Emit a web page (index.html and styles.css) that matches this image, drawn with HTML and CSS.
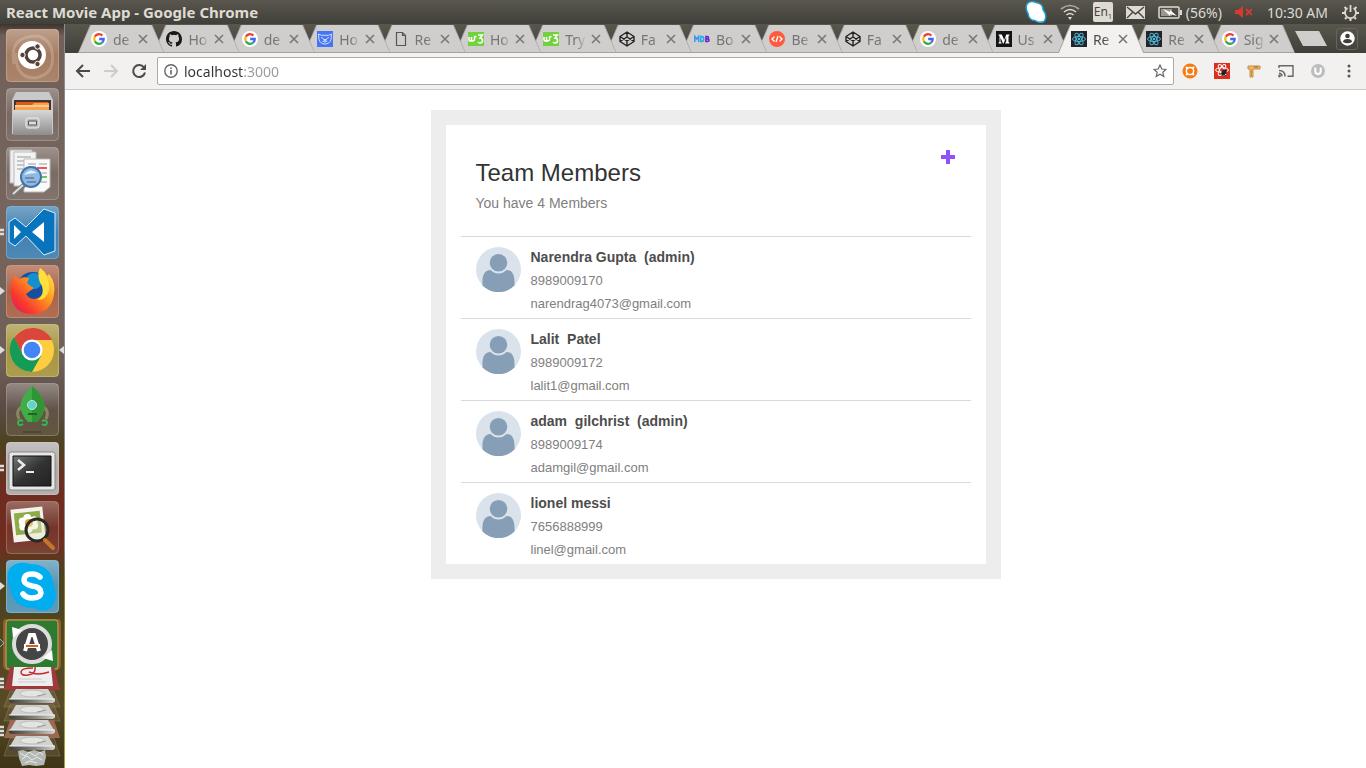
FILE: index.html
```html
<!DOCTYPE html>
<html lang="en">
<head>
<meta charset="utf-8">
<title>React Movie App</title>
<link rel="stylesheet" href="styles.css">
</head>
<body>
<svg class="defs" aria-hidden="true">
  <defs>
    <linearGradient id="shine" x1="0" y1="0" x2="0" y2="1"><stop offset="0" stop-color="#fff" stop-opacity=".3"/><stop offset=".5" stop-color="#fff" stop-opacity=".04"/><stop offset="1" stop-color="#fff" stop-opacity=".1"/></linearGradient>
    <linearGradient id="metal" x1="0" y1="0" x2="0" y2="1"><stop offset="0" stop-color="#d8d8d8"/><stop offset="1" stop-color="#8d8d8d"/></linearGradient>
    <linearGradient id="edge" x1="0" y1="0" x2="1" y2="0"><stop offset="0" stop-color="#3c3c3c"/><stop offset=".6" stop-color="#8a8a8a"/><stop offset="1" stop-color="#d0d0d0"/></linearGradient>
    <linearGradient id="dark" x1="0" y1="0" x2="1" y2="1"><stop offset="0" stop-color="#777"/><stop offset=".5" stop-color="#333"/><stop offset="1" stop-color="#222"/></linearGradient>
    <linearGradient id="fox" x1="1" y1="0" x2="0" y2="1"><stop offset="0" stop-color="#fff44f"/><stop offset=".4" stop-color="#ff9a1f"/><stop offset=".75" stop-color="#f9352f"/><stop offset="1" stop-color="#d6136e"/></linearGradient>
  </defs>
  <symbol id="google" viewBox="0 0 16 16"><circle cx="8" cy="8" r="8" fill="#fff"/><g fill="none" stroke-width="2.3"><path d="M11.4 4.6A4.8 4.8 0 0 0 3.8 5.7" stroke="#ea4335"/><path d="M3.8 5.7a4.8 4.8 0 0 0 0 4.6" stroke="#fbbc05"/><path d="M3.8 10.3a4.8 4.8 0 0 0 7.5 1.2" stroke="#34a853"/><path d="M11.3 11.5A4.8 4.8 0 0 0 12.7 8H8.2" stroke="#4267f5"/></g></symbol>
  <symbol id="github" viewBox="0 0 16 16"><path fill="#181818" d="M8 0C3.58 0 0 3.58 0 8c0 3.54 2.29 6.53 5.47 7.59.4.07.55-.17.55-.38v-1.49c-2.01.37-2.53-.49-2.69-.94-.09-.23-.48-.94-.82-1.13-.28-.15-.68-.52-.01-.53.63-.01 1.08.58 1.23.82.72 1.21 1.87.87 2.33.66.07-.52.28-.87.51-1.07-1.78-.2-3.64-.89-3.64-3.95 0-.87.31-1.59.82-2.15-.08-.2-.36-1.02.08-2.12 0 0 .67-.21 2.2.82a7.600 7.600 0 0 1 4 0c1.53-1.04 2.200-.82 2.200-.82.44 1.100.16 1.920.08 2.120.51.56.82 1.270.82 2.150 0 3.070-1.870 3.750-3.650 3.950.29.25.54.73.54 1.480v2.190c0 .21.15.46.55.38A8 8 0 0 0 16 8c0-4.420-3.580-8-8-8z"/></symbol>
  <symbol id="bear" viewBox="0 0 16 16"><path fill="#4574f5" d="M0 0h16v16H0z"/><path d="M1.500 3l3 1.300h7l3-1.300-.5 5.500c-.8 3-3 4.500-6 4.500s-5.200-1.500-6-4.500zM4 6.500l2.500 1M12 6.500L9.500 7.500M5.500 10q2.500 2 5 0M6.500 8.500h3L8 10z" fill="none" stroke="#cfe0ff"/></symbol>
  <symbol id="page" viewBox="0 0 16 16"><path d="M3.500 1.500h6l3 3v10h-9zM9.500 1.500v3h3" fill="none" stroke="#555" stroke-width="1.200"/></symbol>
  <symbol id="w3" viewBox="0 0 16 16"><path fill="#73d13d" d="M0 1h16v14H0z"/><path d="M1 6v2.500q0 1.500 1.200 1.500T3.500 8.500V6v2.500Q3.500 10 4.800 10T6.500 8.500V6q0-1 2 0M10 4h4.500L12 7q2.500 0 2.500 2.500T12 12q-1.500 0-2-1" fill="none" stroke="#fff" stroke-width="1.500"/></symbol>
  <symbol id="codepen" viewBox="0 0 16 16"><path d="M8 1l7 4.500v5L8 15l-7-4.500v-5zM1 5.500L8 10l7-4.500M1 10.500L8 6l7 4.500M8 1v5M8 10v5" fill="none" stroke="#222" stroke-width="1.400" stroke-linejoin="round"/></symbol>
  <symbol id="mdb" viewBox="0 0 16 16"><path d="M.8 11V5.500L2.700 8l1.900-2.500V11" fill="none" stroke="#2f9bea" stroke-width="1.500"/><path d="M6.700 5.500v5h1q2 0 2-2.500t-2-2.500z" fill="none" stroke="#25a6e8" stroke-width="1.500"/><path d="M12 5.500v5h1.500q1.500 0 1.500-1.300T13.500 8H12h1.200q1.300 0 1.300-1.200t-1.300-1.300z" fill="none" stroke="#6b1fc9" stroke-width="1.600"/></symbol>
  <symbol id="code" viewBox="0 0 16 16"><circle cx="8" cy="8" r="8" fill="#ff5a3d"/><path d="M5.500 5.500L3 8l2.500 2.500M10.500 5.500L13 8l-2.500 2.500M9 5l-2 6" fill="none" stroke="#fff" stroke-width="1.300"/></symbol>
  <symbol id="medium" viewBox="0 0 16 16"><path fill="#141414" d="M0 0h16v16H0z"/><path fill="#fff" d="M2.500 3.500h3.300L8.200 9l2.100-5.500h3.200v.7l-1 .8v6l1 .8v.7H9.200v-.7l1-.8V6L7.600 12.500H7L4.500 6.500V11l1.100.8v.7H2.500v-.7l1-.8V5l-1-.8z"/></symbol>
  <symbol id="react" viewBox="0 0 16 16"><path fill="#212428" d="M0 0h16v16H0z"/><g fill="none" stroke="#4fb6d6"><ellipse cx="8" cy="8" rx="6.500" ry="2.500"/><ellipse cx="8" cy="8" rx="6.500" ry="2.500" transform="rotate(60 8 8)"/><ellipse cx="8" cy="8" rx="6.500" ry="2.500" transform="rotate(120 8 8)"/></g><circle cx="8" cy="8" r="1.300" fill="#4fb6d6"/></symbol>
  <symbol id="close" viewBox="0 0 10 10"><path d="M1 1l8 8M9 1L1 9" stroke="#757575" stroke-width="1.500"/></symbol>
  <symbol id="avatar" viewBox="0 0 45 45"><circle cx="22.500" cy="22.500" r="22.500" fill="#dae2eb"/><path d="M6.500 38.500C6 29 8 23 14.500 23q3.500 3.500 8 3.500t8-3.500C37 23 39 29 38.500 38.500A22.500 22.500 0 0 1 6.500 38.500z" fill="#879fb6"/><circle cx="22.500" cy="15.800" r="8.800" fill="#879fb6"/></symbol>
  <symbol id="tile" viewBox="0 0 53 53"><rect x=".5" y=".5" width="52" height="52" rx="4" fill="url(#shine)" stroke="#fff" stroke-opacity=".25"/></symbol>
  <symbol id="drive" viewBox="0 0 46 14"><path d="M7 0h32l6 10H1z" fill="#d2d2d0"/><ellipse cx="23" cy="4.500" rx="12" ry="3.500" fill="#e4e4e2" stroke="#bcbcba"/><path d="M28 7l9-2" stroke="#999"/><path d="M0 10h46v2.500l-2 1.500H2l-2-1.500z" fill="url(#edge)"/><path d="M0 10h46" stroke="#f3f3f3"/></symbol>
</svg>

<header class="panel">
  <span class="panel-title">React Movie App - Google Chrome</span>
  <div class="tray">
    <svg width="22" height="24" viewBox="0 0 22 24"><path d="M2 4Q5 0 11 2.500q7 1 7 7 5 7 1 12-5 2-9-1-6 0-7-7-3-5-1-9.500z" fill="#fff" stroke="#1a9fd0" stroke-width="1.500"/></svg>
    <svg width="20" height="16" viewBox="0 0 20 16" fill="none" stroke="#dfdbd2" stroke-width="1.600"><path d="M1 5q9-7 18 0" stroke="#aaa79f"/><path d="M4 8q6-5 12 0"/><path d="M6.500 11q3.500-3 7 0"/><path d="M8 13h4l-2 3z" fill="#dfdbd2" stroke="none"/></svg>
    <span class="lang">En<sub>1</sub></span>
    <svg width="19" height="13" viewBox="0 0 19 13"><path fill="#dfdbd2" d="M0 0h19v13H0z"/><path d="M1 1l8.500 7L18 1M1 12l6-6M18 12l-6-6" stroke="#45443e" stroke-width="1.400" fill="none"/></svg>
    <span class="battery"><svg width="24" height="13" viewBox="0 0 24 13"><rect x="1" y="1" width="20" height="11" rx="1" fill="none" stroke="#dfdbd2" stroke-width="1.500"/><path d="M22 4h2v5h-2z" fill="#dfdbd2"/><path d="M3 3h11v7H3z" fill="#99968e"/><path d="M5 3l7 3V4l7 6-7-2v2z" fill="#fff"/></svg>(56%)</span>
    <svg width="17" height="12" viewBox="0 0 17 12"><path d="M0 4h3l5-4v12L3 8H0z" fill="#d93a2b"/><path d="M11 3l6 6M17 3l-6 6" stroke="#d93a2b" stroke-width="1.800"/></svg>
    <time>10:30 AM</time>
    <svg width="17" height="17" viewBox="0 0 17 17" fill="none" stroke="#dfdbd2"><path d="M5.500 4A5.500 5.500 0 1 0 11.500 4" stroke-width="1.800"/><path d="M8.500 1v7" stroke-width="1.800"/><path d="M2.500 3l1.500 1.500M14.500 3L13 4.500M0 9h3M14 9h3M3 15l1.500-1.500M14 15l-1.500-1.500M8.500 14v3" stroke-width="2"/></svg>
  </div>
</header>

<div class="desktop">
  <nav class="launcher" aria-label="Launcher">
    <button aria-label="Dash"><svg viewBox="0 0 65 53"><g transform="translate(6)"><rect width="53" height="53" rx="4" fill="#a1775b"/><path d="M8 35Q2 7 32 7q17 5 14 27M45 18q7 27-16 31Q9 49 10 24" fill="none" stroke="#d5b69f" stroke-opacity=".4" stroke-width="3"/><use href="#tile" width="53" height="53"/><circle cx="26" cy="26" r="14" fill="#fff"/><circle cx="27" cy="26" r="7" fill="none" stroke="#54423a" stroke-width="3.500"/><g fill="#54423a" stroke="#fff"><circle cx="16.500" cy="26" r="2.700"/><circle cx="31.500" cy="17.500" r="2.700"/><circle cx="31.500" cy="35" r="2.700"/></g></g></svg></button>
    <button aria-label="Files"><svg viewBox="0 0 65 53"><g transform="translate(6)"><use href="#tile" width="53" height="53"/><path d="M10 4h33l4 8v34H6V12z" fill="#c9c9c9"/><path d="M8 12h37v10H8z" fill="#433"/><path d="M10 14h32v7H10z" fill="#d95916"/><path d="M9 17h17l2-2h15v8H9z" fill="#f5a44c"/><path d="M9 18h34" stroke="#fff0d8"/><path d="M7 22h39v25H7z" fill="url(#metal)"/><rect x="20" y="30" width="13" height="10" rx="2" fill="#bbb" stroke="#eee"/><path d="M22.500 33h8v4h-8z" fill="#ddd" stroke="#555"/></g></svg></button>
    <button aria-label="Document viewer"><svg viewBox="0 0 65 53"><g transform="translate(6)"><use href="#tile" width="53" height="53"/><path d="M4 3h22v33H4z" fill="#eee" stroke="#bbb"/><path d="M8 5h22v34H8z" fill="#f4f4f4" stroke="#bbb"/><path d="M11 10h14M11 14h14M11 18h14M11 22h12" stroke="#999"/><path d="M18 12h26v28l-6 5H18z" fill="#fafafa" stroke="#bbb"/><path d="M22 17h8M22 20h8M33 17h8M36 26h5M35 35h6" stroke="#999"/><path d="M31 21h10" stroke="#e55" stroke-width="2"/><path d="M34 30h7" stroke="#6c6" stroke-width="2"/><path d="M7 48l11-10" stroke="#777" stroke-width="5" stroke-linecap="round"/><path d="M7 47l10-9" stroke="#ddd" stroke-width="2"/><circle cx="25" cy="30" r="10" fill="#8eb9e2" stroke="#4273a9" stroke-width="2"/><path d="M18 28q6-8 13-2-6 0-13 2z" fill="#e3f1fc"/><path d="M19 31h9M21 35h9" stroke="#557"/></g></svg></button>
    <button aria-label="Visual Studio Code"><svg viewBox="0 0 65 53"><path d="M0 24h4M0 28h4" stroke="#ddd" stroke-width="2.500"/><g transform="translate(6)"><rect width="53" height="53" rx="4" fill="#3b7cae"/><use href="#tile" width="53" height="53"/><path d="M38 3l11 4v38l-11 4-18-19-11 10-6-4V16l6-4 11 9z" fill="#0874bd" stroke="#d9edfa"/><path d="M38 16v20L26 26zM8 19v14l7-7z" fill="#fff"/></g></svg></button>
    <button aria-label="Firefox"><svg viewBox="0 0 65 53"><path d="M0 22l5 4-5 4z" fill="#ddd"/><g transform="translate(6)"><rect width="53" height="53" rx="4" fill="#a85d40"/><use href="#tile" width="53" height="53"/><circle cx="27" cy="24" r="17" fill="#174ea0"/><circle cx="28" cy="16" r="8" fill="#168fd0"/><path d="M10 9q0 5 3 5 4-3 10-1l-2 5q3 3 7 5l-8 6q4 7 12 4 8-4 6-12-6-9-4-18 5 3 7 8l2-2q7 9 5 20-3 20-22 20Q7 49 5 29 4 19 7 14z" fill="url(#fox)"/><path d="M34 3q10 9 9 22-2 10-12 10 8-5 5-14-6-9-2-18z" fill="#ffe03b"/></g></svg></button>
    <button aria-label="Chrome"><svg viewBox="0 0 65 53"><path d="M0 22l5 4-5 4zM64 22l-5 4 5 4z" fill="#ddd"/><g transform="translate(6)"><rect width="53" height="53" rx="4" fill="#a3923a"/><use href="#tile" width="53" height="53"/><circle cx="26" cy="26" r="22" fill="#fccd3f"/><path d="M8 14A22 22 0 0 1 46 16H26L17 31z" fill="#d9473c"/><path d="M8 13A22 22 0 0 0 26 48l9-16-18-1z" fill="#149b58"/><circle cx="26" cy="26" r="10.500" fill="#fff"/><circle cx="26" cy="26" r="8.300" fill="#4285f4"/></g></svg></button>
    <button aria-label="Rocket"><svg viewBox="0 0 65 53"><g transform="translate(6)"><use href="#tile" width="53" height="53"/><path d="M17 23q-8 4-4 13M36 23q8 4 4 13" fill="none" stroke="#8d8660" stroke-width="3"/><path d="M26 3q11 8 13 21-2 9-8 15H22q-6-6-8-15Q16 11 26 3z" fill="#42ad48"/><path d="M26 3q11 8 13 21-2 9-8 15h-5z" fill="#319538"/><circle cx="26" cy="22" r="4.500" fill="#62d3c5" stroke="#b9eee1"/><path d="M22 31h9" stroke="#1b6724" stroke-width="2"/><path d="M17 38q-5-2-5 2 1 4 5 1M36 38q5-2 5 2-1 4-5 1" fill="none" stroke="#38b554" stroke-width="2"/><path d="M17 49h18" stroke="#433"/></g></svg></button>
    <button aria-label="Terminal"><svg viewBox="0 0 65 53"><path d="M0 24h4M0 28h4" stroke="#ddd" stroke-width="2.500"/><g transform="translate(6)"><rect width="53" height="53" rx="4" fill="#aaa6a4"/><use href="#tile" width="53" height="53"/><rect x="3" y="10" width="46" height="38" rx="2" fill="#e6e6e6" stroke="#888"/><path d="M7 14h38v30H7z" fill="url(#dark)" stroke="#111"/><path d="M12 18l6 5-6 5" fill="none" stroke="#eee" stroke-width="2.500"/><path d="M20 30h8" stroke="#eee" stroke-width="2"/></g></svg></button>
    <button aria-label="Image viewer"><svg viewBox="0 0 65 53"><g transform="translate(6)"><use href="#tile" width="53" height="53"/><g transform="rotate(-6 22 23)"><path d="M6 7h32v33H6z" fill="#f3f3ed"/><path d="M9 11h26v22H9z" fill="#8eab48"/><g fill="#fff"><circle cx="22" cy="17" r="4"/><circle cx="17" cy="20" r="4"/><circle cx="17" cy="25" r="4"/><circle cx="28" cy="20" r="4"/><circle cx="28" cy="25" r="4"/><circle cx="22" cy="28" r="4"/></g><circle cx="23" cy="22" r="4" fill="#e9a02a"/></g><circle cx="31" cy="29" r="11" fill="#e8e8c8" fill-opacity=".45" stroke="#292927" stroke-width="3"/><path d="M39 39l8 8" stroke="#c3762c" stroke-width="4" stroke-linecap="round"/></g></svg></button>
    <button aria-label="Skype"><svg viewBox="0 0 65 53"><path d="M0 22l5 4-5 4z" fill="#ddd"/><g transform="translate(6)"><rect width="53" height="53" rx="4" fill="#4d90b3"/><use href="#tile" width="53" height="53"/><path d="M4 8Q12 0 24 4q22 0 24 23 5 12-3 21-8 5-17 0Q6 48 4 27-1 17 4 8z" fill="#00adef"/><path d="M34 17q-3-3-8-3-8 0-8 6 0 4 8 6 9 1 9 7-1 5-9 5-6 0-9-4" fill="none" stroke="#fff" stroke-width="5.500" stroke-linecap="round"/></g></svg></button>
    <button aria-label="Software updater"><svg viewBox="0 0 65 53"><path d="M0 20l4 4-4 4" stroke="#76b9d3" fill="none"/><g transform="translate(6)"><rect x="-1" y="0" width="54" height="50" rx="4" fill="none" stroke="#f09545" stroke-opacity=".35" stroke-width="4"/><rect x="0" y="1" width="52" height="49" rx="3" fill="#2e7a31" stroke="#e0a05c"/><circle cx="26" cy="25" r="18" fill="#454545" stroke="#dcdcdc" stroke-width="4"/><path d="M6 8l10 3-9 8zM47 42l-10-3 9-8z" fill="#fff"/><path d="M19 32l5-16h4l5 16M18 27h16" fill="none" stroke="#fff" stroke-width="4"/><path d="M20 27h12" stroke="#e45a20" stroke-width="2"/></g></svg></button>
    <button class="stack" aria-label="More applications"><svg viewBox="0 0 65 101"><path d="M10 0h44l6 23H4z" fill="#9e3a3c"/><path d="M14 0h37l2 19H12z" fill="#eee"/><path d="M18 15h28M18 12h24" stroke="#ccc"/><path d="M33 1q-12 0-12 4t7 3q8-1 7-8M29 5q8 4 20 0" stroke="#cc2630" stroke-width="1.500" fill="none"/><path d="M0 12h4M0 16h4M0 20h4M0 60h4M0 64h4M0 68h4" stroke="#ddd" stroke-width="2.500"/><g fill="#c7ad8d" fill-opacity=".15" stroke="#fff" stroke-opacity=".15"><path d="M10 24h44l6 16H4zM10 38h44l6 16H4zM10 71h44l6 18H4z"/></g><path d="M10 53h44l6 18H4z" fill="#996952"/><use href="#drive" x="9" y="22" width="46" height="14"/><use href="#drive" x="9" y="38" width="46" height="14"/><use href="#drive" x="9" y="53" width="46" height="14"/><use href="#drive" x="9" y="69" width="46" height="14"/><path d="M18 84l5-1 5 2 6-2 6 2 5-2 1 7-2 8-8 1-7-1-7 1-3-8z" fill="#b4b9b5"/><path d="M20 86l5 3 4-4 6 4 5-4 3 3M22 92l5-3 5 4 5-3 5 3M25 96l5-2 7 2" stroke="#e9ece8" fill="none"/></svg></button>
  </nav>

  <div class="browser">
    <div class="tab-strip">
      <div class="tabs">
        <div class="tab"><svg class="favicon"><use href="#google"/></svg><span class="tab-name">de</span><button aria-label="Close tab"><svg><use href="#close"/></svg></button></div>
        <div class="tab"><svg class="favicon"><use href="#github"/></svg><span class="tab-name">Ho</span><button aria-label="Close tab"><svg><use href="#close"/></svg></button></div>
        <div class="tab"><svg class="favicon"><use href="#google"/></svg><span class="tab-name">de</span><button aria-label="Close tab"><svg><use href="#close"/></svg></button></div>
        <div class="tab"><svg class="favicon"><use href="#bear"/></svg><span class="tab-name">Ho</span><button aria-label="Close tab"><svg><use href="#close"/></svg></button></div>
        <div class="tab"><svg class="favicon"><use href="#page"/></svg><span class="tab-name">Re</span><button aria-label="Close tab"><svg><use href="#close"/></svg></button></div>
        <div class="tab"><svg class="favicon"><use href="#w3"/></svg><span class="tab-name">Ho</span><button aria-label="Close tab"><svg><use href="#close"/></svg></button></div>
        <div class="tab"><svg class="favicon"><use href="#w3"/></svg><span class="tab-name">Try</span><button aria-label="Close tab"><svg><use href="#close"/></svg></button></div>
        <div class="tab"><svg class="favicon"><use href="#codepen"/></svg><span class="tab-name">Fa</span><button aria-label="Close tab"><svg><use href="#close"/></svg></button></div>
        <div class="tab"><svg class="favicon"><use href="#mdb"/></svg><span class="tab-name">Bo</span><button aria-label="Close tab"><svg><use href="#close"/></svg></button></div>
        <div class="tab"><svg class="favicon"><use href="#code"/></svg><span class="tab-name">Be</span><button aria-label="Close tab"><svg><use href="#close"/></svg></button></div>
        <div class="tab"><svg class="favicon"><use href="#codepen"/></svg><span class="tab-name">Fa</span><button aria-label="Close tab"><svg><use href="#close"/></svg></button></div>
        <div class="tab"><svg class="favicon"><use href="#google"/></svg><span class="tab-name">de</span><button aria-label="Close tab"><svg><use href="#close"/></svg></button></div>
        <div class="tab"><svg class="favicon"><use href="#medium"/></svg><span class="tab-name">Us</span><button aria-label="Close tab"><svg><use href="#close"/></svg></button></div>
        <div class="tab active"><svg class="favicon"><use href="#react"/></svg><span class="tab-name">Re</span><button aria-label="Close tab"><svg><use href="#close"/></svg></button></div>
        <div class="tab"><svg class="favicon"><use href="#react"/></svg><span class="tab-name">Re</span><button aria-label="Close tab"><svg><use href="#close"/></svg></button></div>
        <div class="tab"><svg class="favicon"><use href="#google"/></svg><span class="tab-name">Sig</span><button aria-label="Close tab"><svg><use href="#close"/></svg></button></div>
      </div>
      <button class="new-tab" aria-label="New tab"></button>
      <button class="profile" aria-label="Profile"><svg width="15" height="15" viewBox="0 0 15 15"><circle cx="7.500" cy="7.500" r="7.200" fill="#fff"/><circle cx="7.500" cy="5" r="2.300" fill="#3f3e39"/><path d="M3 11q0-3 4.500-3T12 11q-4.500 2.500-9 0z" fill="#3f3e39"/></svg></button>
    </div>

    <div class="toolbar">
      <div class="nav-buttons">
        <button aria-label="Back"><svg width="16" height="16" viewBox="0 0 16 16"><path d="M15 8H2M8 2L2 8l6 6" fill="none" stroke="#4a4a4a" stroke-width="2"/></svg></button>
        <button aria-label="Forward"><svg width="16" height="16" viewBox="0 0 16 16"><path d="M1 8h13M8 2l6 6-6 6" fill="none" stroke="#ccc" stroke-width="2"/></svg></button>
        <button aria-label="Reload"><svg width="16" height="16" viewBox="0 0 16 16"><path d="M13 4.500A6 6 0 1 0 14 9.500" fill="none" stroke="#4a4a4a" stroke-width="2"/><path d="M15 1v6H9z" fill="#4a4a4a"/></svg></button>
      </div>
      <div class="address">
        <svg width="14" height="14" viewBox="0 0 14 14"><circle cx="7" cy="7" r="6.200" fill="none" stroke="#666" stroke-width="1.400"/><path d="M7 6v4.500M7 3.500v1.600" stroke="#666" stroke-width="1.600"/></svg>
        <input type="text" value="localhost:3000" aria-label="Address">
        <button aria-label="Bookmark this page"><svg width="14" height="14" viewBox="0 0 14 14"><path d="M7 1l1.800 4 4.200.4-3.200 2.900 1 4.200L7 10.300l-3.800 2.200 1-4.200L1 5.400 5.200 5z" fill="none" stroke="#666" stroke-width="1.200"/></svg></button>
      </div>
      <div class="extensions">
        <button aria-label="Support extension"><svg viewBox="0 0 16 16"><circle cx="8" cy="8" r="7.500" fill="#f77b12"/><circle cx="8" cy="8" r="3.600" fill="none" stroke="#fff" stroke-width="1.500"/><path d="M4 4l1.500 1.500M12 4l-1.500 1.500M4 12l1.500-1.500M12 12l-1.500-1.500" stroke="#fff" stroke-width="1.800"/></svg></button>
        <button aria-label="React tools"><svg viewBox="0 0 16 16"><path fill="#d9301f" d="M0 0h16v16H0z"/><g fill="none" stroke="#fff"><ellipse cx="8" cy="7" rx="6.500" ry="2.300"/><ellipse cx="8" cy="7" rx="6" ry="2.300" transform="rotate(60 8 7)"/><ellipse cx="8" cy="7" rx="6" ry="2.300" transform="rotate(120 8 7)"/></g><ellipse cx="10" cy="9.500" rx="2" ry="3.500" fill="#222" transform="rotate(35 10 9.500)"/><path d="M7 10l5 3M8.500 7l4 4" stroke="#222"/></svg></button>
        <button aria-label="Ruler"><svg viewBox="0 0 16 16"><path d="M2 3h12v3H7v8H4V6H2z" fill="#edb867" stroke="#c88f42"/><path d="M9 3v2M11 3v2M5 8h1M5 10h1M5 12h1" stroke="#956526"/></svg></button>
        <button aria-label="Cast"><svg viewBox="0 0 16 16" fill="none" stroke="#666" stroke-width="1.400"><path d="M1 5V2.700h14v10.600H9.500M1 7.500q6 0 6 6M1 10.300q3 0 3 3"/><circle cx="1.500" cy="13" r=".7"/></svg></button>
        <button aria-label="Shield"><svg viewBox="0 0 16 16"><circle cx="8" cy="8" r="7" fill="#bdbdbd"/><path d="M5.300 4.500V8q0 3 2.700 3t2.700-3V4.500" fill="none" stroke="#fff" stroke-width="2"/></svg></button>
        <button class="menu" aria-label="Menu"><svg viewBox="0 0 14 16" fill="#555"><circle cx="7" cy="3" r="1.500"/><circle cx="7" cy="8" r="1.500"/><circle cx="7" cy="13" r="1.500"/></svg></button>
      </div>
    </div>

    <main class="page">
      <section class="card">
        <div class="card-head">
          <div>
            <h1>Team Members</h1>
            <p>You have 4 Members</p>
          </div>
          <button class="add" aria-label="Add member"><svg width="14" height="14" viewBox="0 0 14 14"><path d="M5 0h4v5h5v4H9v5H5V9H0V5h5z" fill="#9250fb"/></svg></button>
        </div>
        <ul class="members">
          <li><svg class="avatar"><use href="#avatar"/></svg><div><h2>Narendra Gupta &nbsp;(admin)</h2><p>8989009170</p><p>narendrag4073@gmail.com</p></div></li>
          <li><svg class="avatar"><use href="#avatar"/></svg><div><h2>Lalit &nbsp;Patel</h2><p>8989009172</p><p>lalit1@gmail.com</p></div></li>
          <li><svg class="avatar"><use href="#avatar"/></svg><div><h2>adam &nbsp;gilchrist &nbsp;(admin)</h2><p>8989009174</p><p>adamgil@gmail.com</p></div></li>
          <li><svg class="avatar"><use href="#avatar"/></svg><div><h2>lionel messi</h2><p>7656888999</p><p>linel@gmail.com</p></div></li>
        </ul>
      </section>
    </main>
  </div>
</div>
</body>
</html>
```
FILE: styles.css
```css
* {
  box-sizing: border-box;
}

body {
  margin: 0;
  height: 100vh;
  overflow: hidden;
  display: flex;
  flex-direction: column;
  font-family: "Noto Sans", "Open Sans", sans-serif;
  font-size: 14px;
}

button {
  border: 0;
  padding: 0;
  background: none;
  display: flex;
  align-items: center;
  justify-content: center;
}

h1, h2, p, ul {
  margin: 0;
  padding: 0;
}

svg {
  display: block;
  flex: none;
}

.defs {
  position: absolute;
  width: 0;
  height: 0;
}

/* Top panel */
.panel {
  display: flex;
  justify-content: space-between;
  align-items: center;
  flex: none;
  height: 24px;
  padding: 0 7px 0 6px;
  background: linear-gradient(#59574e, #403f3a);
  color: #dfdbd2;
}

.panel-title {
  font-size: 15px;
  font-weight: 700;
  line-height: 24px;
}

.tray {
  display: flex;
  align-items: center;
  gap: 13px;
}

.tray time {
  margin: 0 1px 0 2px;
}

.lang {
  width: 20px;
  height: 20px;
  border-radius: 2px;
  background: #dfdbd2;
  color: #45443e;
  font-size: 12px;
  line-height: 20px;
  text-align: center;
  white-space: nowrap;
}

.lang sub {
  font-size: 7px;
  line-height: 1;
}

.battery {
  display: flex;
  align-items: center;
  gap: 4px;
}

.desktop {
  display: flex;
  flex: 1;
  min-height: 0;
}

/* Launcher */
.launcher {
  display: flex;
  flex-direction: column;
  flex: none;
  gap: 6px;
  width: 65px;
  padding-top: 5px;
  overflow: hidden;
  border-right: 1px solid;
  border-image: linear-gradient(#8c8b92 0, #8c8b92 520px, #8a7a3c 560px, #b5a22c 100%) 1;
  background: linear-gradient(#3f332e 0, #706059 12px, #75655d 180px, #6e5f58 340px, #5b4b42 385px, #4d4220 420px, #6d2d20 460px, #702c1e 520px, #4c421f 550px, #51461f 620px, #584a25 680px, #3e3517 100%);
}

.launcher svg {
  width: 65px;
}

.launcher .stack {
  margin-top: -11px;
}

/* Browser */
.browser {
  display: flex;
  flex-direction: column;
  flex: 1;
  min-width: 0;
}

.tab-strip {
  display: flex;
  align-items: center;
  flex: none;
  height: 29px;
  padding: 0 8px 0 13px;
  background: linear-gradient(#59574c, #403f3a);
}

.tabs {
  display: flex;
  flex: 1;
  align-self: flex-end;
  min-width: 0;
}

.tab {
  position: relative;
  display: flex;
  align-items: center;
  flex: 1;
  min-width: 0;
  height: 28px;
  margin-right: -11px;
  padding: 0 16px 0 13px;
  color: #757575;
}

.tab:last-child {
  margin-right: 0;
}

.tab::before,
.tab::after {
  content: "";
  position: absolute;
  inset: 0;
  z-index: -1;
  background: #a5a3a1;
  clip-path: polygon(0 100%, 12px 0, calc(100% - 12px) 0, 100% 100%);
}

.tab::after {
  inset: 0 1px 1px;
  background: #d0cecd;
}

.tab:nth-child(1) { z-index: 16; }
.tab:nth-child(2) { z-index: 15; }
.tab:nth-child(3) { z-index: 14; }
.tab:nth-child(4) { z-index: 13; }
.tab:nth-child(5) { z-index: 12; }
.tab:nth-child(6) { z-index: 11; }
.tab:nth-child(7) { z-index: 10; }
.tab:nth-child(8) { z-index: 9; }
.tab:nth-child(9) { z-index: 8; }
.tab:nth-child(10) { z-index: 7; }
.tab:nth-child(11) { z-index: 6; }
.tab:nth-child(12) { z-index: 5; }
.tab:nth-child(13) { z-index: 4; }
.tab:nth-child(15) { z-index: 2; }
.tab:nth-child(16) { z-index: 1; }

.tab.active {
  z-index: 20;
  color: #4d4d4d;
}

.tab.active::after {
  inset: 0 1px;
  background: #f2f1f0;
}

.favicon {
  width: 16px;
  height: 16px;
  margin-right: 6px;
}

.tab-name {
  flex: 1;
  min-width: 0;
  margin-right: 2px;
  overflow: hidden;
  white-space: nowrap;
  -webkit-mask-image: linear-gradient(90deg, #000 12px, transparent 21px);
  mask-image: linear-gradient(90deg, #000 12px, transparent 21px);
}

.tab button svg {
  width: 10px;
  height: 10px;
}

.new-tab {
  width: 32px;
  height: 15px;
  background: #d0cecd;
  clip-path: polygon(0 0, 24px 0, 100% 100%, 8px 100%);
}

.profile {
  width: 22px;
  height: 22px;
  margin-left: 9px;
  border: 1px solid #66645c;
  border-radius: 3px;
}

.toolbar {
  display: flex;
  align-items: center;
  flex: none;
  height: 37px;
  padding: 0 10px;
  border-bottom: 1px solid #cbc9c7;
  background: #f2f1f0;
}

.nav-buttons {
  display: flex;
  gap: 12px;
  margin-right: 10px;
}

.address {
  display: flex;
  align-items: center;
  flex: 1;
  gap: 6px;
  height: 28px;
  padding: 0 6px;
  border: 1px solid #a9a9a7;
  border-radius: 2px;
  background: #fff;
}

.address input {
  flex: 1;
  min-width: 0;
  padding: 0;
  border: 0;
  outline: 0;
  background: linear-gradient(90deg, #333 59px, #999 59px);
  -webkit-background-clip: text;
  background-clip: text;
  color: transparent;
  font: inherit;
}

.extensions {
  display: flex;
  gap: 16px;
  margin-left: 8px;
}

.extensions svg {
  width: 16px;
  height: 16px;
}

.extensions .menu svg {
  width: 14px;
}

/* Page */
.page {
  flex: 1;
  padding: 20px;
  background: #fff;
  font-family: "Liberation Sans", Arial, sans-serif;
}

.card {
  max-width: 570px;
  margin: 0 auto;
  padding: 0 15px;
  border: 15px solid #ededed;
}

.card-head {
  display: flex;
  justify-content: space-between;
  align-items: flex-start;
  padding: 32px 15px 18px;
}

.card h1 {
  color: #333;
  font-size: 24px;
  font-weight: 400;
  line-height: 32px;
}

.card-head p {
  color: #808080;
  font-size: 14px;
  line-height: 29px;
}

.add {
  margin: -7px 1px 0 0;
}

.members {
  list-style: none;
}

.members li {
  display: flex;
  gap: 10px;
  padding: 9px 15px 3px;
  border-top: 1px solid #dadada;
}

.avatar {
  width: 45px;
  height: 45px;
  margin-top: 1px;
}

.members h2 {
  color: #4d4d4d;
  font-size: 14px;
  font-weight: 700;
  line-height: 23px;
}

.members p {
  color: #808080;
  font-size: 13px;
  line-height: 23px;
}
```
